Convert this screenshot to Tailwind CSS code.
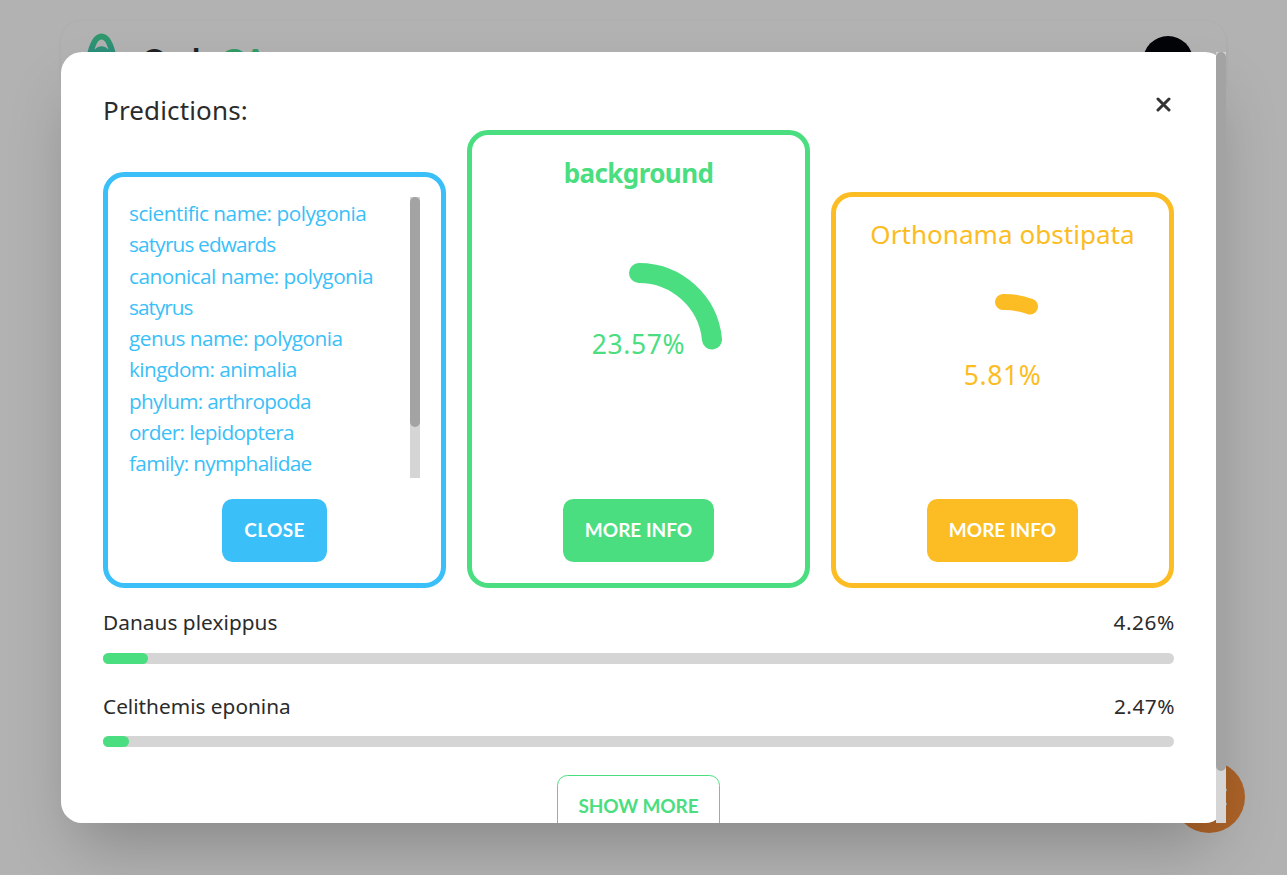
<!DOCTYPE html>
<html lang="en">
<head>
<meta charset="utf-8">
<title>Predictions</title>
<script src="https://cdn.jsdelivr.net/npm/@tailwindcss/browser@4"></script>
</head>
<body class="relative h-[875px] w-[1287px] overflow-hidden bg-[#b2b2b2] font-['Noto_Sans',sans-serif] text-[#2b2b2b]">
<header class="mx-auto mt-[21px] flex h-[80px] w-[1165px] items-start rounded-[21px] pl-[25px] pr-[33px] shadow-[0_1px_4px_rgba(0,0,0,0.05)]">
  <svg class="mt-[12px] shrink-0" width="31" height="40" viewBox="0 0 31 40">
    <defs><linearGradient id="leaf" x1="0" y1="0" x2="0" y2="1"><stop offset="0" stop-color="#319a6a"/><stop offset=".8" stop-color="#2c8d7c"/></linearGradient></defs>
    <path d="M0.5 24C3 10 8 0.500 15.500 0.500S28 10 30.500 24Z" fill="url(#leaf)"/>
    <path d="M8.500 16.500C10.500 10 12.500 6.500 15.500 6.500S20.500 10 22.500 16.500C18 12 13 12 8.500 16.500Z" fill="#b0b0b0"/>
  </svg>
  <div class="ml-[24px] mt-[20px] font-['Lato',sans-serif] text-[34px] font-bold leading-[40px] tracking-[-0.8px] text-[#202226]">Code<span class="ml-[3px] text-[#329b66]">GA</span></div>
  <div class="ml-auto mt-[15px] size-[50px] rounded-full bg-[#030408]"></div>
</header>
<button class="absolute left-[1173px] top-[761px] flex size-[72px] items-center justify-center rounded-full bg-[#ad6328]" aria-label="Settings">
  <svg width="36" height="36" viewBox="0 0 36 36" fill="none" stroke="#b2b2b2" stroke-width="3" stroke-linecap="round"><path d="M3 11H34.500M3 25H34.500"/></svg>
</button>

<div class="absolute inset-0 flex items-center justify-center">
  <div class="flex h-[771px] w-[1165px] rounded-[21px] bg-white shadow-[0_33px_65px_-15px_rgba(0,0,0,0.25)]">
    <div class="flex min-w-0 flex-1 flex-col overflow-hidden px-[42px] pt-[42px]">
      <div class="flex h-9 shrink-0 items-start justify-between">
        <h3 class="text-[26px] leading-[32px] tracking-[0.15px]">Predictions:</h3>
        <svg class="mr-[3px] mt-[3px]" width="15" height="15" viewBox="0 0 15 15" fill="none" stroke="#333" stroke-width="3" stroke-linecap="round"><path d="M2 2L13 13M13 2L2 13"/></svg>
      </div>

      <div class="flex h-[458px] shrink-0 items-end gap-[21px]">
        <section class="flex h-[416px] w-[343px] flex-col items-center rounded-[21px] border-5 border-[#3abff8] p-[20px] text-[#3abff8]">
          <div class="flex h-[281px] w-[291px] shrink-0 justify-between overflow-hidden">
            <div class="whitespace-nowrap pt-px font-['Open_Sans',sans-serif] text-[20.8px] leading-[31.25px]">
              <p class="tracking-[-0.5px]">scientific name: polygonia</p>
              <p class="tracking-[-0.85px]">satyrus edwards</p>
              <p class="tracking-[-0.53px]">canonical name: polygonia</p>
              <p class="tracking-[-1px]">satyrus</p>
              <p class="tracking-[-0.5px]">genus name: polygonia</p>
              <p class="tracking-[-0.6px]">kingdom: animalia</p>
              <p class="tracking-[-0.72px]">phylum: arthropoda</p>
              <p class="tracking-[-0.66px]">order: lepidoptera</p>
              <p class="tracking-[-0.68px]">family: nymphalidae</p>
            </div>
            <div class="h-[281px] w-[10px] bg-[#d5d5d5]"><div class="h-[230px] rounded-full bg-[#a3a3a3]"></div></div>
          </div>
          <button class="mt-[21px] h-[63px] w-[105px] shrink-0 rounded-[10.400px] bg-[#3abff8] font-['Lato',sans-serif] text-[19px] font-bold tracking-[0.4px] text-white">CLOSE</button>
        </section>

        <section class="flex h-[458px] w-[343px] flex-col items-center justify-between rounded-[21px] border-5 border-[#4ade80] p-[21px] text-[#4ade80]">
          <h4 class="text-[26px] font-bold leading-[35px] tracking-[-0.6px]">background</h4>
          <div class="grid size-[167px] place-items-center">
            <svg class="col-start-1 row-start-1" width="167" height="167" viewBox="0 0 167 167" fill="none" stroke="#4ade80" stroke-width="20" stroke-linecap="round"><path d="M84 11A73.500 73.500 0 0 1 157 77.600"/></svg>
            <span class="col-start-1 row-start-1 pb-[3px] text-[26.5px] leading-9 tracking-[0.6px]">23.57%</span>
          </div>
          <div class="flex h-[63px] items-end"><button class="h-[63px] w-[151px] rounded-[10.400px] bg-[#4ade80] font-['Lato',sans-serif] text-[19px] font-bold text-white">MORE INFO</button></div>
        </section>

        <section class="flex h-[396px] w-[343px] flex-col items-center justify-between rounded-[21px] border-5 border-[#fbbd23] p-[21px] text-[#fbbd23]">
          <h4 class="whitespace-nowrap text-[26px] leading-[33px] tracking-[0.05px]">Orthonama obstipata</h4>
          <div class="grid size-[167px] place-items-center">
            <svg class="col-start-1 row-start-1" width="167" height="167" viewBox="0 0 167 167" fill="none" stroke="#fbbd23" stroke-width="16" stroke-linecap="round"><path d="M84 10A75.500 75.500 0 0 1 111 14.500"/></svg>
            <span class="col-start-1 row-start-1 pb-[1px] text-[26.5px] leading-9 tracking-[0.6px]">5.81%</span>
          </div>
          <div class="flex h-[63px] items-end"><button class="h-[63px] w-[151px] rounded-[10.400px] bg-[#fbbd23] font-['Lato',sans-serif] text-[19px] font-bold text-white">MORE INFO</button></div>
        </section>
      </div>

      <div class="mt-[19px] shrink-0">
        <div class="flex h-[46px] justify-between text-[20.8px] leading-[31px]"><span class="tracking-[0.04px]">Danaus plexippus</span><span class="-mr-px tracking-[0.6px]">4.26%</span></div>
        <div class="h-[11px] rounded-full bg-[#d5d5d5]"><div class="h-full rounded-full bg-[#4ade80]" style="width:4.2%"></div></div>
      </div>
      <div class="mt-[27px] shrink-0">
        <div class="flex h-[45px] justify-between text-[20.8px] leading-[31px]"><span>Celithemis eponina</span><span class="-mr-px tracking-[0.5px]">2.47%</span></div>
        <div class="h-[11px] rounded-full bg-[#d5d5d5]"><div class="h-full rounded-full bg-[#4ade80]" style="width:2.47%"></div></div>
      </div>
      <button class="mx-auto mt-[28px] h-[63px] w-[163px] shrink-0 rounded-[10.400px] border border-[#4ade80] font-['Lato',sans-serif] text-[19px] font-bold tracking-[-0.1px] text-[#4ade80]">SHOW MORE</button>
    </div>
    <div class="w-[10px] shrink-0 bg-[#d5d5d5]"><div class="h-[719px] rounded-full bg-[#a3a3a3]"></div></div>
  </div>
</div>
</body>
</html>
